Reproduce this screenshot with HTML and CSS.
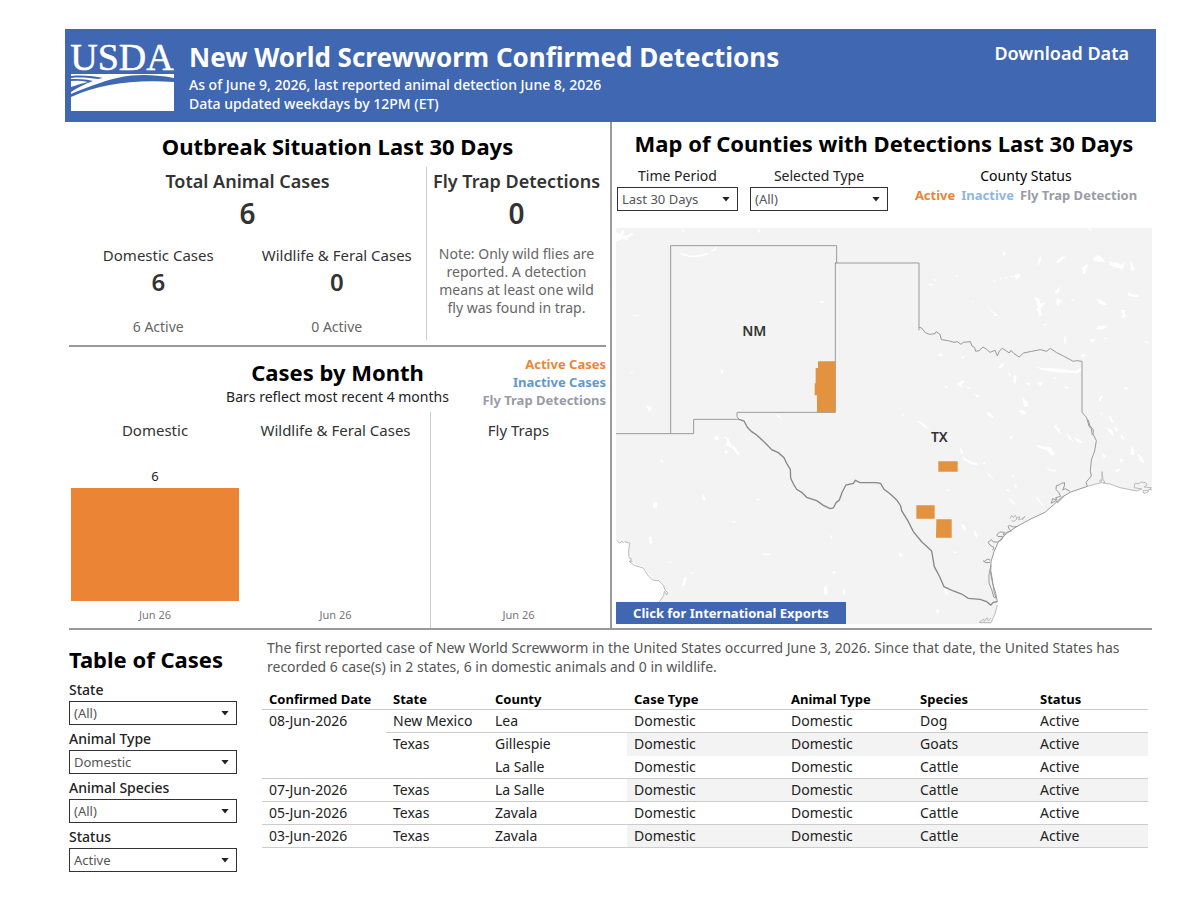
FILE: index.html
```html
<!DOCTYPE html>
<html lang="en">
<head>
<meta charset="utf-8">
<title>New World Screwworm Confirmed Detections</title>
<link rel="stylesheet" href="styles.css">
</head>
<body>
<div class="page">
  <header class="banner">
    <svg class="logo" viewBox="0 0 104 76" role="img" aria-label="USDA">
      <text class="logo-text" x="52" y="34" text-anchor="middle">USDA</text>
      <path fill="#fff" d="M1 38h103v4C70 36 50 40 30 47 20 50 10 54 1 58v-2c6-4 13-8 22-11C15 43 8 43 1 43v-1c10-1 19 0 27 1l5-1C24 40 13 39 1 40z"/>
      <path fill="#fff" d="M1 45q9-1 17 1Q9 48 1 51zM1 61Q42 42 104 46v29H1z"/>
    </svg>
    <div class="banner-text">
      <h1>New World Screwworm Confirmed Detections</h1>
      <p>As of June 9, 2026, last reported animal detection June 8, 2026</p>
      <p>Data updated weekdays by 12PM (ET)</p>
    </div>
    <a class="download" href="#">Download Data</a>
  </header>

  <main>
    <div class="upper">
      <div class="left">
        <section class="situation">
          <h2>Outbreak Situation Last 30 Days</h2>
          <div class="situation-body">
            <div class="totals">
              <h3>Total Animal Cases</h3>
              <div class="total">6</div>
              <div class="split">
                <div>
                  <h4>Domestic Cases</h4>
                  <div class="subtotal">6</div>
                  <div class="active-count">6 Active</div>
                </div>
                <div>
                  <h4>Wildlife &amp; Feral Cases</h4>
                  <div class="subtotal">0</div>
                  <div class="active-count">0 Active</div>
                </div>
              </div>
            </div>
            <div class="traps">
              <h3>Fly Trap Detections</h3>
              <div class="total">0</div>
              <p class="note">Note: Only wild flies are reported. A detection means at least one wild fly was found in trap.</p>
            </div>
          </div>
        </section>
        <section class="monthly">
          <div class="monthly-head">
            <div class="monthly-title">
              <h2>Cases by Month</h2>
              <p>Bars reflect most recent 4 months</p>
            </div>
            <ul class="legend">
              <li class="c-active">Active Cases</li>
              <li class="c-inactive-dark">Inactive Cases</li>
              <li class="c-trap">Fly Trap Detections</li>
            </ul>
          </div>
          <div class="charts">
            <div class="chart"><h4>Domestic</h4><div class="plot"><span>6</span><div class="bar"></div></div><div class="month">Jun 26</div></div>
            <div class="chart"><h4>Wildlife &amp; Feral Cases</h4><div class="plot"></div><div class="month">Jun 26</div></div>
            <div class="chart chart-traps"><h4>Fly Traps</h4><div class="plot"></div><div class="month">Jun 26</div></div>
          </div>
        </section>
      </div>

      <section class="map-panel">
        <h2>Map of Counties with Detections Last 30 Days</h2>
        <div class="map-controls">
          <div class="field field-period">
            <label for="period">Time Period</label>
            <div class="select"><select id="period"><option>Last 30 Days</option></select></div>
          </div>
          <div class="field field-type">
            <label for="type">Selected Type</label>
            <div class="select"><select id="type"><option>(All)</option></select></div>
          </div>
          <div class="status-key">
            <div class="key-title">County Status</div>
            <div class="key-items"><span class="c-active">Active</span><span class="c-inactive">Inactive</span><span class="c-trap">Fly Trap Detection</span></div>
          </div>
        </div>
        <div class="map">
          <svg viewBox="0 0 1608 1188" role="img" aria-label="Map of New Mexico and Texas counties with detections">
            <rect width="1608" height="1188" fill="#f3f3f3"/>
            <!-- Gulf of Mexico -->
            <g transform="translate(792 576)">
              <path fill="#fff" d="M816 210L790 208 760 212 720 203 690 192 660 189 622 199 570 217 545 232 520 255 495 277 450 298 410 320 380 340 355 366 342 395 333 425 332 460 338 490 347 520 352 545 350 562 345 582 332 612H816z"/>
              <path class="coast" d="M622 199l38-10 6-2-8-4 4-4 4 3V155l3 24 6 8-7 2 22 3 30 11 36 7 15 3 15-6-24-4 3-13 12 1 6-5 14 2 4 7-9 6 22 2-8 8-18 1 4 8 12-4 3-8 14 3 8 10M352 555l-7 27-12 26-36-1 14-10 2 7 8-11 4 10 8-9M390 296l5-10 5 7 6-8 5 12-9 7-7-2M410 294l9-4-3 10 10-4 9-7-8 11"/>
            </g>
            <!-- Pacific side -->
            <g transform="translate(-18 516)">
              <path fill="#fff" d="M18 418l11 10 14-4 16 6-4 24 4 23 16 14 27 10 15 22 13 14 19 2 12 15 8 20-17 31H18z"/>
              <path class="coast" d="M20 420l9 10 6-6 6 4 3-3 15 4-3 24 1 20 8 4-4 4 6 3-10 0 16 12 27 8 13 21 15 15 19 2 14 15 4 13 8 8-3 7-7-11-2 13-14 20"/>
            </g>
            <!-- Lakes and rivers -->
            <g fill="#fff">
              <path d="M0 14l12 4 8-12 6 5-7 13 15-2 14-8 4 5-20 13 5 5-20-4-17 8z"/>
              <path d="M191 74q14 3 21 6 22 6 49-1l12-5 4 3-19 7q-29 7-50 0-14-3-17-10zM284 68q13-4 15-14l3-1q1 14-14 18zM610 220l16-2-2 6-12 1zM94 532l10 5 6-2-4 7 1 7-6-3-4 5-1-9-6-5zM314 428l4-6 5 8-3 9-6-4zM45 261l20 1 6 4-18-3zM44 432l14 2-14 2zM198 6l10 1-8 6zM425 4l8 2-3 10-5-8zM480 562l12 1 6 10-8-4z"/>
              <path d="M291 630l14-8 4 12-9 2zM323 624l14 7 11 24 5 2-3-8 21 28-6 4-16-20-20-9 6-12zM326 668l8-2 1 12-8-4zM137 688l3 14-2 4-5-8zM262 798l6 17-6 3-4-7zM110 824l8-4 8 8-5 14-8-2zM418 812l18 2-12 4zM346 878l14 2-4 4zM98 930l8-7 2 22-6 6zM156 1000l12 3-6 2zM221 1034l18-2-16 6zM205 1048l5-2-1 26-13 2zM437 976l30 2-10 4-16-2zM640 918l9 10-3 5zM648 1030l13 1-8 9zM624 1080l8-8 3 26-10 3zM680 1086l10-2-6 18-3-4z"/>
            </g>
            <g fill="#fff" transform="translate(792 -9)">
              <path d="M624 10l8 1 3 8-9-4zM369 79l11 5-6 8-7-1zM477 98l8-4-5 19-8 10zM529 109l16-14 11-1-9 12-15 9zM640 98l14-8 14 10 7 10-19 0-16-1zM685 109l14 3 9 0 18 9 8-12-5 24-18-5-20-8zM751 106l10 21 3 11-12-4zM604 130l16-13 6 5-10 13 3 6-8 6zM225 151l11 2-7 4zM157 163l15 1-8 3zM145 177l23 2-20 3zM340 166l8 1-5 4zM356 160l8-1-2 5zM374 157l10-2-4 6zM389 153l13 0-4 5zM404 148l16-1 2 7-12 9-7-5zM524 202l16-18-3 15-8 8zM531 219l17 10-9 4-4 10-7-8zM573 222l12 2-9 4zM461 217l16 3 4 16 14-4-5 10-9 6 4 21-8 6-4-18-6-2 7-5-3-16zM744 202l12 6 18 1 4 8-15 0-18-5zM649 223l14 0 18 16-10 2-15-8zM722 255l14 0-1 12 5 8-16 5 4-10zM277 228l5 2-4 5zM319 243l19 16 18 14-11 0-8-12zM488 297l14 1-10 5zM653 302l28 2-18 12-13-4zM629 342l19 2-13 8zM669 339l14 0-8 4zM554 330l6 12-3 14-6-3zM792 348l13 2 4 6-8-1zM605 388l17 2-16 8zM174 390l10-5 4 7-12 2zM244 398l14-8-6 8-9 4zM354 428l14-14 4 5-10 10zM467 424l17 5 54 2 50 6 12-8 6 6-16 10-63-3-42-7zM385 440l8 9-5 6zM402 450l8 3-4 26-6-7zM438 473l14 2-5 7zM468 470l10 3 12-4-7 14-8-6zM518 460l13-8-6 9zM551 482l18 5-9 4zM195 482l10 3-8 5zM231 478l18-13 3 5-8 11 4 8zM258 484l14 5-7 2zM282 505l20 11-12 0zM426 514l16 18 5 10-14 4zM413 559l16-5 12 12-11 1-8 9 4-11zM655 524l11-16 1 10-7 12zM731 485l16 4-10 7zM660 560l8 8-2 5zM684 568l12 12 6 16-8-5zM65 563l7 8-5 2zM320 558l15 9 6 13-18-9zM108 585l20 8 23 22-16-8zM521 598l14 10 8 17-13-8zM700 604l17 9-9 8z"/>
            </g>
            <g fill="#fff" transform="translate(792 576)">
              <path d="M240 80l9 14-1 10-7-5zM247 108l26 18 17 2 3 8-18-3-25-13zM389 47l8 3-6 10zM470 74l21 6 18 1 17 22-13 4-9-15-31-10zM557 35l14 16 9 15-13-10zM580 50l20 9 10 12-18-5zM498 142l21 9 14 0-9 4-18-5zM310 125l8 2-7 6zM320 155l14 14 8 12-18-16zM394 163l10 5-4 5zM402 192l10 6-5 6zM466 226l13 14 5 12-12-12zM480 248l10 4-4 6zM384 230l18 18 5 10-14-13zM376 206l12 5-4 5zM199 209l10 0-7 6zM242 309l14 10 1 15-9-8zM284 329l9 16-3 9-7-10zM218 394l14 2-8 4zM57 400l11 2-5 10-5-3zM192 501l12 17-1 10-8-8zM168 568l11 2-5 13-4-3zM680 22l17 8 4 18-10-6zM724 42l10 11-4 7-9-10zM665 100l14 8-6 8zM718 113l15 7-12 9zM755 78l9 15-3 15-10-7zM772 100l16 14 6 18-14-9zM706 150l16-5-10 15z"/>
            </g>
            <!-- Borders -->
            <g class="border" transform="translate(-18 -9)">
              <path d="M18 626H251V583H387L381 575V562H676V114H680V62H182V626"/>
              <path d="M676 114H927V316"/>
            </g>
            <path class="border" transform="translate(792 -9)" d="M117 307l8 2 11 14 12 5 17-2 3-6 12 8 4 16 21 3 17 5 10-2 11 8 7-6 21-2 5 13 8 5 3 11 10-2 12-11 11 7 10 9 15-6 7 17 6-15 9-8 11 7 10 7 5-8 9 10 16 10 12-12 25-5 27-5 18 5 11-9 19 13 20 10 30 16 10-2 16 2V562l14 16 7 25 7 9 3 18"/>
            <path class="border river" transform="translate(-18 516)" d="M387 58l15 5 10 19 13 13 15 10 25 23 20 21 20 9 17 15 8 17 11 18 1 27 10 20 8 13 15 9 15 15 30 10 20 14 20 10 10-2 8-16 10-8 9-25 11-20 22-5 6-9 14 7h50l12 3 10 17 18 13"/>
            <g transform="translate(792 576)">
              <path class="border river" d="M30 221l20 19 12 18 3 14 20 33 15 30 25 30 30 28 8 47 15 28 14 32 28 13 25 9 20 13 35 3 20 7 12 10 8-8 12-2"/>
              <path class="border" d="M625 0l4 16 11 14-1 12 10 20-5 31-10 27-3 32 3 16-16 19 4 12-52 18-25 15-25 23-25 22-45 21-40 22-30 20-25 26-13 29-9 30-1 35 6 30 9 30 5 25M570 214l-14-8-8 4 5-12 1-10-10 2-7 5-8 2-1 12 8 8 6 12-15 4 4 7-13-4-4 14 14-8 5 6 20-20M414 319l-14 2-12-5-4 3 4 9 6 5-14 4-10 8 3-8-14-1-9 9 4 5 14-1-2 9-14 8-12 0-6-7-10 8 6 8 12 8-4 8M331 420l-9-3-8 7-4-1 8 5 12-1M333 435l-6 28 0 26 9 23 5 19 7 3-6-20-4-29-5-30"/>
            </g>
            <!-- Counties with detections -->
            <g fill="#e3923f">
              <path d="M606 400h52v153h-55v-51h-7v-36h3v-46h7z"/>
              <path d="M967 700h58v31h-58zM901 832h55v40h-55zM961 874h46v55h-47z"/>
            </g>
            <text class="state-label" x="415" y="324">NM</text>
            <text class="state-label" x="970" y="642">TX</text>
          </svg>
          <button class="exports" type="button">Click for International Exports</button>
        </div>
      </section>
    </div>

    <section class="lower">
      <form class="filters">
        <h2>Table of Cases</h2>
        <div class="field"><label for="f-state">State</label><div class="select"><select id="f-state"><option>(All)</option></select></div></div>
        <div class="field"><label for="f-animal">Animal Type</label><div class="select"><select id="f-animal"><option>Domestic</option></select></div></div>
        <div class="field"><label for="f-species">Animal Species</label><div class="select"><select id="f-species"><option>(All)</option></select></div></div>
        <div class="field"><label for="f-status">Status</label><div class="select"><select id="f-status"><option>Active</option></select></div></div>
      </form>
      <div class="cases">
        <p class="summary">The first reported case of New World Screwworm in the United States occurred June 3, 2026. Since that date, the United States has recorded 6 case(s) in 2 states, 6 in domestic animals and 0 in wildlife.</p>
        <table>
          <colgroup><col class="w-date"><col class="w-state"><col class="w-county"><col class="w-case"><col class="w-animal"><col class="w-species"><col></colgroup>
          <thead>
            <tr><th>Confirmed Date</th><th>State</th><th>County</th><th>Case Type</th><th>Animal Type</th><th>Species</th><th>Status</th></tr>
          </thead>
          <tbody>
            <tr><td rowspan="3">08-Jun-2026</td><td>New Mexico</td><td>Lea</td><td>Domestic</td><td>Domestic</td><td>Dog</td><td>Active</td></tr>
            <tr><td rowspan="2">Texas</td><td class="open">Gillespie</td><td class="shade open">Domestic</td><td class="shade open">Domestic</td><td class="shade open">Goats</td><td class="shade open">Active</td></tr>
            <tr><td>La Salle</td><td>Domestic</td><td>Domestic</td><td>Cattle</td><td>Active</td></tr>
            <tr><td>07-Jun-2026</td><td>Texas</td><td>La Salle</td><td class="shade">Domestic</td><td class="shade">Domestic</td><td class="shade">Cattle</td><td class="shade">Active</td></tr>
            <tr><td>05-Jun-2026</td><td>Texas</td><td>Zavala</td><td>Domestic</td><td>Domestic</td><td>Cattle</td><td>Active</td></tr>
            <tr><td>03-Jun-2026</td><td>Texas</td><td>Zavala</td><td class="shade">Domestic</td><td class="shade">Domestic</td><td class="shade">Cattle</td><td class="shade">Active</td></tr>
          </tbody>
        </table>
      </div>
    </section>
  </main>
</div>
</body>
</html>
```
FILE: styles.css
```css
* { box-sizing: border-box; }
body {
  margin: 0;
  background: #fff;
  color: #333;
  font-family: "Noto Sans", "Open Sans", sans-serif;
  font-size: 14px;
  line-height: 18px;
}
h1, h2, h3, h4, p, ul { margin: 0; padding: 0; }
ul { list-style: none; }
h2 { color: #000; font-size: 22px; line-height: 30px; font-weight: 700; text-align: center; }
h3 { font-size: 18px; line-height: 24px; font-weight: 600; text-align: center; }
h4 { font-size: 15px; line-height: 20px; font-weight: 400; text-align: center; }

.page { padding: 29px 44px 0 65px; }

.banner {
  display: flex;
  align-items: flex-start;
  min-height: 93px;
  padding: 7px 27px 8px 5px;
  background: #4067b1;
  color: #fff;
}
.logo { flex: none; width: 104px; height: 76px; }
.logo-text { font-family: "Liberation Serif", serif; font-size: 38px; fill: #fff; stroke: #fff; stroke-width: 0.5px; }
.banner-text { flex: 1; padding: 3px 0 0 15px; font-weight: 500; }
.banner-text p { line-height: 19px; }
.banner h1 { font-size: 26px; line-height: 36px; font-weight: 700; }
.download { padding-top: 4px; color: #fff; font-size: 18px; line-height: 26px; font-weight: 600; text-decoration: none; }

main { padding: 0 4px; }
.upper { display: grid; grid-template-columns: 541px 1fr; border-bottom: 2px solid #999; }
.left { display: flex; flex-direction: column; padding-right: 4px; }

.situation { height: 225px; padding-top: 9px; border-bottom: 2px solid #999; }
.situation-body { display: grid; grid-template-columns: 2fr 1fr; margin-top: 6px; }
.totals { border-right: 1px solid #ccc; height: 173px; padding-top: 2px; }
.traps { padding-top: 2px; }
.total { margin: 2px 0; font-size: 28px; line-height: 36px; font-weight: 600; text-align: center; }
.split { display: grid; grid-template-columns: 1fr 1fr; margin-top: 14px; text-align: center; }
.subtotal { font-size: 24px; line-height: 34px; font-weight: 600; }
.active-count { margin-top: 19px; color: #666; }
.note { margin: 14px 8px 0; color: #666; text-align: center; }

.monthly { flex: 1; display: flex; flex-direction: column; }
.monthly-head { display: grid; grid-template-columns: 1fr 140px; }
.monthly-title { padding: 10px 0 0 140px; color: #222; text-align: center; }
.monthly-title p { line-height: 20px; }
.legend { padding-top: 8px; font-size: 13px; text-align: right; font-weight: 700; }
.c-active { color: #e8863a; }
.c-inactive { color: #8fb6e3; }
.c-inactive-dark { color: #6099cf; }
.c-trap { color: #989ca6; }
.charts { flex: 1; display: grid; grid-template-columns: 172px 1fr 176px; margin-top: 3px; }
.chart { display: flex; flex-direction: column; padding-top: 8px; text-align: center; }
.chart-traps { border-left: 1px solid #ccc; }
.plot { flex: 1; display: flex; flex-direction: column; justify-content: flex-end; padding: 0 2px; color: #222; font-size: 13px; }
.bar { height: 113px; margin-top: 3px; background: #eb8434; }
.month { padding: 5px 0 4px; color: #777; font-size: 11px; }

.map-panel { padding: 6px 0 4px 4px; border-left: 2px solid #999; }
.map-controls { display: flex; gap: 12px; padding: 9px 0 0 1px; }
.field label { display: block; color: #222; }
.map-controls label { text-align: center; }
.field-period { width: 121px; }
.field-type { width: 138px; }
.select { display: grid; align-items: center; margin-top: 2px; }
.select select {
  grid-area: 1 / 1;
  width: 100%;
  height: 24px;
  padding: 0 4px;
  border: 1px solid #333;
  border-radius: 0;
  background: #fff;
  color: #555;
  font: inherit;
  font-size: 13px;
  appearance: none;
}
.select::after {
  content: "";
  grid-area: 1 / 1;
  justify-self: end;
  width: 8px;
  height: 5px;
  margin-right: 8px;
  background: #222;
  clip-path: polygon(0 0, 100% 0, 50% 100%);
  pointer-events: none;
}
.status-key { flex: 1; color: #000; text-align: center; }
.key-items { display: flex; justify-content: center; gap: 6px; padding-top: 1px; font-size: 13px; font-weight: 700; white-space: nowrap; }
.map { position: relative; margin-top: 17px; }
.map svg { display: block; width: 100%; }
.coast { fill: none; stroke: #bbb; stroke-width: 3; }
.border { fill: none; stroke: #999; stroke-width: 3; }
.river { stroke: #888; stroke-width: 4; }
.state-label { fill: #333; font-size: 42px; font-weight: 600; text-anchor: middle; }
.exports {
  position: absolute;
  left: 0;
  bottom: 0;
  width: 230px;
  height: 22px;
  padding: 0;
  border: 0;
  background: #4067b1;
  color: #fff;
  font: inherit;
  font-size: 13px;
  font-weight: 700;
}

.lower { display: grid; grid-template-columns: 168px 1fr; gap: 25px; }
.filters { padding-top: 14px; }
.filters h2 { margin-bottom: 7px; text-align: left; }
.filters .field { margin-bottom: 5px; }
.filters label { font-weight: 500; }
.cases { padding: 8px 4px 0 0; }
.summary { padding: 0 5px; color: #555; line-height: 19px; }
table { width: 100%; margin-top: 11px; border-collapse: separate; border-spacing: 0; table-layout: fixed; color: #222; }
th, td { height: 23px; padding: 2px 7px; border-bottom: 1px solid #ccc; text-align: left; vertical-align: top; white-space: nowrap; }
th { padding: 3px 7px 1px; color: #000; font-size: 13px; font-weight: 700; }
.open { border-bottom-color: transparent; }
.shade { background: #f3f3f3; }
.w-date { width: 124px; }
.w-state { width: 102px; }
.w-county { width: 139px; }
.w-case { width: 157px; }
.w-animal { width: 129px; }
.w-species { width: 120px; }
```
